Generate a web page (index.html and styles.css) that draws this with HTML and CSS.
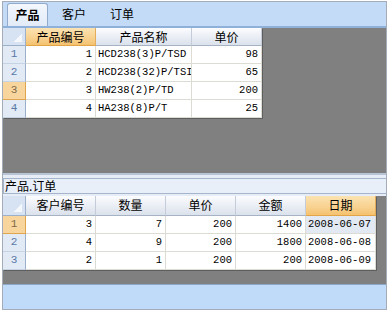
FILE: index.html
```html
<!DOCTYPE html>
<html lang="zh-CN">
<head>
    <meta charset="UTF-8">
    <title>产品 订单</title>
    <link rel="stylesheet" href="styles.css">
</head>
<body>
    <div class="frame">
        <div class="tabstrip">
            <div class="tab active">产品</div>
            <div class="tab">客户</div>
            <div class="tab">订单</div>
        </div>

        <div class="pane top-pane">
            <div class="grid grid-products">
                <div class="corner"></div>
                <div class="hd selected">产品编号</div>
                <div class="hd">产品名称</div>
                <div class="hd">单价</div>

                <div class="rh">1</div>
                <div class="cell num">1</div>
                <div class="cell">HCD238(3)P/TSD</div>
                <div class="cell num">98</div>

                <div class="rh">2</div>
                <div class="cell num">2</div>
                <div class="cell">HCD238(32)P/TSI</div>
                <div class="cell num">65</div>

                <div class="rh selected">3</div>
                <div class="cell num">3</div>
                <div class="cell">HW238(2)P/TD</div>
                <div class="cell num">200</div>

                <div class="rh">4</div>
                <div class="cell num">4</div>
                <div class="cell">HA238(8)P/T</div>
                <div class="cell num">25</div>
            </div>
        </div>

        <div class="caption-bar">
            <div class="caption">产品.订单</div>
        </div>

        <div class="pane bottom-pane">
            <div class="grid grid-orders">
                <div class="corner"></div>
                <div class="hd">客户编号</div>
                <div class="hd">数量</div>
                <div class="hd">单价</div>
                <div class="hd">金额</div>
                <div class="hd selected">日期</div>

                <div class="rh selected">1</div>
                <div class="cell num">3</div>
                <div class="cell num">7</div>
                <div class="cell num">200</div>
                <div class="cell num">1400</div>
                <div class="cell current">2008-06-07</div>

                <div class="rh">2</div>
                <div class="cell num">4</div>
                <div class="cell num">9</div>
                <div class="cell num">200</div>
                <div class="cell num">1800</div>
                <div class="cell">2008-06-08</div>

                <div class="rh">3</div>
                <div class="cell num">2</div>
                <div class="cell num">1</div>
                <div class="cell num">200</div>
                <div class="cell num">200</div>
                <div class="cell">2008-06-09</div>
            </div>
        </div>

        <div class="status-area"></div>
    </div>
</body>
</html>
```

FILE: styles.css
```css
* {
    margin: 0;
    padding: 0;
    box-sizing: border-box;
}

body {
    background: #ffffff;
    font-family: "Noto Sans CJK SC", sans-serif;
    font-size: 12px;
    color: #000000;
}

.frame {
    margin: 1px 0 0 2px;
    width: 385px;
    height: 309px;
    border: 1px solid #a3acb8;
    display: flex;
    flex-direction: column;
}

/* tabs */
.tabstrip {
    height: 26px;
    flex: none;
    background: #c3dbf7;
    border-bottom: 2px solid #8fb0d9;
    display: flex;
    align-items: flex-end;
    padding-left: 4px;
}

.tab {
    width: 48px;
    height: 23px;
    line-height: 21px;
    text-align: center;
}

.tab.active {
    width: 41px;
    margin-right: 2px;
    background: linear-gradient(#f3f7fd, #e2ebf7);
    border: 1px solid #93abcb;
    border-bottom: none;
    border-radius: 3px 3px 0 0;
    font-weight: bold;
}

/* panes */
.pane {
    background: #808080;
    flex: none;
}

.top-pane {
    height: 145px;
}

.bottom-pane {
    height: 88px;
}

.caption-bar {
    height: 23px;
    flex: none;
    background: #e6edf7;
    border-top: 2px solid #b6c4d6;
    padding-top: 3px;
}

.caption {
    height: 16px;
    border-top: 1px solid #a5b6cc;
    border-bottom: 1px solid #a5b6cc;
    border-left: 1px solid #a5b6cc;
    line-height: 14px;
    padding-left: 1px;
    background: #e9eff9;
}

.status-area {
    flex: 1;
    background: #c0dbfa;
    border-top: 1px solid #8ea7c6;
}

/* grids */
.grid {
    display: grid;
    grid-auto-rows: 18px;
    width: max-content;
    background: #ffffff;
    box-shadow: 1px 1px 0 #5e5e5e;
}

.grid-products {
    grid-template-columns: 23px 70px 96px 70px;
}

.grid-orders {
    grid-template-columns: 23px repeat(5, 70px);
    grid-template-rows: 20px;
}

.corner {
    background:
        linear-gradient(135deg, transparent 60%, #f4f7fb 60%) right 3px bottom 3px / 11px 11px no-repeat,
        #d7e3f3;
    border-right: 1px solid #9db0c9;
    border-bottom: 1px solid #9db0c9;
}

.hd {
    background: linear-gradient(#fbfcfe, #e9edf4 55%, #dbe2ec);
    border-right: 1px solid #c3ccd8;
    border-bottom: 1px solid #a6b3c4;
    text-align: center;
    line-height: 17px;
}

.hd.selected {
    background: linear-gradient(#fbe3b2, #f8d18f 60%, #f4c26f);
    border-right-color: #e3ad5b;
    border-bottom: 1px solid #e3a347;
}

.rh {
    background: #e2eaf5;
    color: #5879a8;
    border-right: 1px solid #9db0c9;
    border-bottom: 1px solid #c6d3e4;
    font-family: "Liberation Mono", monospace;
    font-size: 11px;
    line-height: 17px;
    text-align: center;
}

.rh.selected {
    background: #f8d59c;
    color: #7d6a4a;
    border-bottom-color: #e0a64f;
    border-right-color: #e0a64f;
}

.cell {
    border-right: 1px solid #dcdcd4;
    border-bottom: 1px solid #dcdcd4;
    font-family: "Liberation Mono", monospace;
    font-size: 10.5px;
    line-height: 17px;
    padding: 0 2px 0 2px;
    white-space: nowrap;
    overflow: hidden;
}

.cell.num {
    text-align: right;
    padding-right: 3px;
}

.cell.current {
    background: #e3e9f3;
}
```
